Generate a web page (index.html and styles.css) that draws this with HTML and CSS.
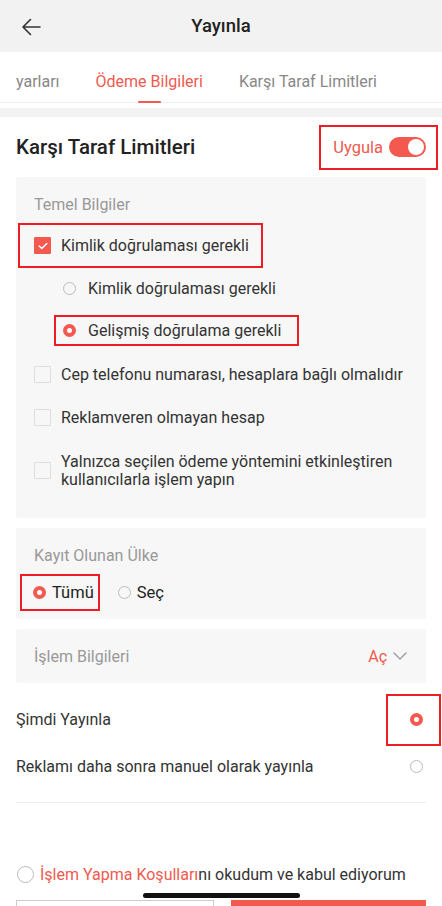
FILE: index.html
```html
<!DOCTYPE html>
<html lang="tr">
<head>
<meta charset="utf-8">
<link rel="stylesheet" href="styles.css">
</head>
<body>
<div class="page">
  <header class="topbar">
    <svg class="back" width="20" height="18" viewBox="0 0 20 18"><path d="M19 9H2M9.5 1.5L2 9l7.5 7.5" fill="none" stroke="#333" stroke-width="1.6" stroke-linecap="round" stroke-linejoin="round"/></svg>
    <h1 class="title">Yayınla</h1>
  </header>
  <nav class="tabs">
    <span class="tab">yarları</span>
    <span class="tab active">Ödeme Bilgileri</span>
    <span class="tab">Karşı Taraf Limitleri</span>
  </nav>
  <div class="band"></div>

  <section class="section">
    <div class="sec-head">
      <h2 class="sec-title">Karşı Taraf Limitleri</h2>
      <div class="apply mark">
        <span class="apply-label">Uygula</span>
        <span class="switch"><span class="knob"></span></span>
      </div>
    </div>

    <div class="card">
      <div class="card-label block-label">Temel Bilgiler</div>
      <div class="row check-row mark mark-check">
        <span class="cb checked"><svg width="10" height="8" viewBox="0 0 10 8"><path d="M1.2 4l2.6 2.5L8.8 1.5" fill="none" stroke="#fff" stroke-width="1.5" stroke-linecap="round" stroke-linejoin="round"/></svg></span>
        <span>Kimlik doğrulaması gerekli</span>
      </div>
      <div class="row sub-row">
        <span class="rb"></span>
        <span>Kimlik doğrulaması gerekli</span>
      </div>
      <div class="row sub-row sub-sel mark mark-sub">
        <span class="rb on"></span>
        <span>Gelişmiş doğrulama gerekli</span>
      </div>
      <div class="row check-row">
        <span class="cb"></span>
        <span>Cep telefonu numarası, hesaplara bağlı olmalıdır</span>
      </div>
      <div class="row check-row">
        <span class="cb"></span>
        <span>Reklamveren olmayan hesap</span>
      </div>
      <div class="row check-row multi">
        <span class="cb"></span>
        <span>Yalnızca seçilen ödeme yöntemini etkinleştiren kullanıcılarla işlem yapın</span>
      </div>
    </div>

    <div class="card card-country">
      <div class="card-label block-label">Kayıt Olunan Ülke</div>
      <div class="country-opts">
        <span class="opt mark mark-all"><span class="rb on"></span><span>Tümü</span></span>
        <span class="opt"><span class="rb"></span><span>Seç</span></span>
      </div>
    </div>

    <div class="card card-trade">
      <span class="card-label">İşlem Bilgileri</span>
      <span class="open">Aç <svg width="14" height="8" viewBox="0 0 14 8"><path d="M1 1l6 6 6-6" fill="none" stroke="#999" stroke-width="1.3" stroke-linecap="round" stroke-linejoin="round"/></svg></span>
    </div>

    <div class="publish">
      <div class="pub-row">
        <span>Şimdi Yayınla</span>
        <span class="pub-radio mark"><span class="rb on"></span></span>
      </div>
      <div class="pub-row">
        <span>Reklamı daha sonra manuel olarak yayınla</span>
        <span class="pub-radio"><span class="rb"></span></span>
      </div>
    </div>
  </section>

  <div class="agree">
    <span class="rb big"></span>
    <span><span class="red">İşlem Yapma Koşulları</span>nı okudum ve kabul ediyorum</span>
  </div>

  <div class="actions">
    <span class="btn btn-ghost"></span>
    <span class="btn btn-primary"></span>
  </div>
  <div class="home-bar"></div>
</div>
</body>
</html>
```
FILE: styles.css
```css
* { box-sizing: border-box; }
html, body { margin: 0; padding: 0; }
body {
  width: 442px;
  height: 906px;
  overflow: hidden;
  background: #fff;
  font-family: Roboto, "Noto Sans", sans-serif;
  color: #333;
}
.page { position: relative; height: 906px; overflow: hidden; }

.topbar {
  height: 52px;
  background: #f2f2f2;
  display: flex;
  align-items: center;
  justify-content: center;
  position: relative;
}
.back { position: absolute; left: 21px; top: 18px; }
.title { margin: 0; font-size: 18.5px; font-weight: 500; color: #222; }

.tabs {
  height: 51px;
  display: flex;
  align-items: center;
  gap: 36px;
  padding: 0 0 0 16px;
  border-bottom: 1px solid #eeeeee;
  white-space: nowrap;
  font-size: 16px;
  color: #888;
}
.tab { position: relative; height: 51px; line-height: 60px; }
.tab.active { color: #f05a50; }
.tab.active::after {
  content: "";
  position: absolute;
  left: 50%;
  bottom: 0;
  width: 23px;
  margin-left: -11px;
  height: 2px;
  background: #f05a50;
  border-radius: 1px;
}
.band { height: 9px; margin-top: 5px; background: #f2f2f2; }

.section { padding: 0 16px; }
.sec-head {
  height: 60px;
  display: flex;
  align-items: center;
  justify-content: space-between;
}
.sec-title { margin: 0; font-size: 20.5px; font-weight: 500; color: #222; }

.mark { outline: 2px solid #ee1c24; }
.apply {
  display: flex;
  align-items: center;
  gap: 6px;
  height: 41px;
  padding: 0 10px 0 12px;
  margin-right: -10px;
}
.apply-label { color: #f05a50; font-size: 16.5px; }
.switch {
  width: 37px; height: 20px; border-radius: 10px;
  background: #f4594f;
  position: relative;
  display: inline-block;
}
.knob {
  position: absolute; right: 2px; top: 2px;
  width: 16px; height: 16px; border-radius: 50%; background: #fff;
}

.card {
  background: #f7f7f7;
  border-radius: 2px;
  padding: 0 18px 1px;
}
.card-label { color: #999; font-size: 16px; }
.block-label { display: block; padding-top: 18px; height: 48px; }

.row { display: flex; align-items: center; font-size: 16px; color: #333; }
.check-row { gap: 10px; height: 43px; }
.check-row.mark-check {
  margin: 0 0 0 -14px;
  padding: 0 12px 0 14px;
  width: 241px;
  height: 41px;
}
.check-row.multi { height: 63px; line-height: 18px; }
.sub-row { gap: 12px; padding-left: 29px; height: 44px; }
.sub-row.sub-sel {
  margin-left: 22px;
  padding-left: 7px;
  width: 241px;
  height: 27px;
  margin-top: 7px;
  margin-bottom: 9px;
}
.card > .row:last-child { margin-bottom: 15px; }

.cb {
  width: 17px; height: 17px; flex: none;
  border: 1px solid #dddddd;
  background: #f7f7f7;
  display: inline-flex; align-items: center; justify-content: center;
  border-radius: 1px;
}
.cb.checked { background: #f4594f; border-color: #f4594f; }

.rb {
  width: 13px; height: 13px; flex: none;
  border: 1px solid #bbb;
  border-radius: 50%;
  display: inline-block;
  background: transparent;
}
.rb.on { border: 4px solid #f4594f; background: #fff; }
.rb.big { width: 17px; height: 17px; border-color: #bbb; }

.card-country { margin-top: 10px; padding-bottom: 10px; }
.country-opts { display: flex; align-items: center; gap: 20px; font-size: 16.5px; color: #222; }
.opt { display: inline-flex; align-items: center; gap: 6px; height: 33px; }
.mark-all { margin-left: -12px; padding: 0 4px 0 11px; }

.card-trade {
  margin-top: 10px;
  height: 54px;
  display: flex;
  align-items: center;
  justify-content: space-between;
  padding-bottom: 0;
}
.open { color: #f05a50; font-size: 16px; display: inline-flex; align-items: center; gap: 6px; margin-right: 1px; }

.publish { border-bottom: 1px solid #eeeeee; padding: 13px 0 12px; }
.pub-row {
  display: flex; align-items: center; justify-content: space-between;
  font-size: 16px; color: #333;
  height: 47px;
}
.pub-radio { display: inline-flex; align-items: center; justify-content: center; width: 51px; height: 48px; margin-right: -13px; padding-left: 6px; }
.pub-row .pub-radio:not(.mark) { height: 46px; }

.agree {
  display: flex; align-items: center; gap: 6px;
  padding: 0 16px 0 17px;
  margin-top: 62px;
  font-size: 16px; color: #333;
  white-space: nowrap;
}
.red { color: #f05a50; }

.actions { display: flex; gap: 17px; padding: 0 16px; margin-top: 16px; }
.btn { height: 44px; flex: 1; }
.btn-ghost { border: 1px solid #ccc; background: #fff; }
.btn-primary { background: #f4594f; }
.home-bar {
  position: absolute; left: 143px; top: 893px;
  width: 157px; height: 5px; border-radius: 3px; background: #111;
}
```
